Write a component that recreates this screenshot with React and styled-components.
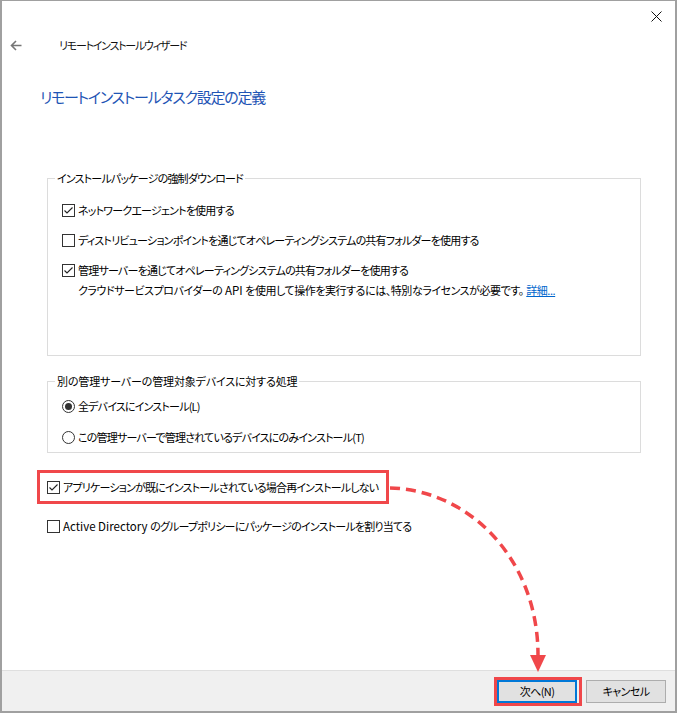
import React from 'react'
import styled, { createGlobalStyle } from 'styled-components'

const Global = createGlobalStyle`
  html, body {
    margin: 0;
    padding: 0;
    background: #fff;
    overflow: hidden;
  }
  body {
    font-family: 'Noto Sans CJK JP', 'Noto Sans', sans-serif;
    font-feature-settings: 'palt';
    color: #000;
  }
`

const RED = '#f0474a'

const Window = styled.div`
  position: relative;
  box-sizing: border-box;
  width: 677px;
  height: 713px;
  border: 2px solid #a0a0a0;
  border-top-width: 1px;
  background: #fff;
  display: flex;
  flex-direction: column;
`

const Close = styled.button`
  position: absolute;
  top: 4px;
  right: 4px;
  width: 30px;
  height: 22px;
  border: 0;
  padding: 0;
  background: none;
  display: flex;
  align-items: center;
  justify-content: center;
`

const Nav = styled.div`
  display: flex;
  align-items: center;
  height: 20px;
  margin-top: 34px;
  padding-left: 8px;
`

const Back = styled.span`
  display: flex;
  width: 12px;
  margin-right: 37px;
`

const WizardTitle = styled.span`
  font-size: 11px;
  letter-spacing: -1.25px;
  color: #111;
`

const Heading = styled.h1`
  margin: 30px 0 0 38px;
  font-size: 15px;
  letter-spacing: -1.25px;
  line-height: 24px;
  font-weight: normal;
  color: #1f55b5;
`

const Body = styled.div`
  display: flex;
  flex-direction: column;
  padding: 0 34px 0 45px;
  margin-top: 61px;
  font-size: 11px;
  letter-spacing: -0.8px;
`

const Latin = styled.span`
  font-size: 11.5px;
  letter-spacing: 0;
`

const Group = styled.fieldset`
  margin: ${p => p.$gap || 0}px 0 0 0;
  border: 1px solid #dcdcdc;
  padding: ${p => p.$pt}px 0 ${p => p.$pb}px 14px;
  min-width: 0;
`

const Legend = styled.legend`
  margin-left: -7px;
  padding: 0 2px;
  font-size: 11px;
  line-height: 16px;
  letter-spacing: ${p => p.$ls ?? -0.8}px;
`

const Rows = styled.div`
  display: flex;
  flex-direction: column;
  gap: ${p => p.$gap}px;
`

const Row = styled.label`
  display: flex;
  align-items: center;
  height: 20px;
  gap: 3px;
  white-space: nowrap;
`

const Note = styled.div`
  height: 20px;
  line-height: 20px;
  padding-left: 16px;
  white-space: pre;
  letter-spacing: -0.45px;
`

const Link = styled.a`
  color: #0066cc;
  text-decoration: underline;
`

const Box = styled.span`
  box-sizing: border-box;
  width: 13px;
  height: 13px;
  border: 1px solid #333;
  background: #fff;
  flex: none;
  display: flex;
`

const Radio = styled.span`
  box-sizing: border-box;
  width: 13px;
  height: 13px;
  border: 1px solid #333;
  border-radius: 50%;
  flex: none;
  display: flex;
  align-items: center;
  justify-content: center;
  &::after {
    content: '';
    width: 7px;
    height: 7px;
    border-radius: 50%;
    background: ${p => (p.$on ? '#333' : 'transparent')};
  }
`

const Highlight = styled.div`
  align-self: flex-start;
  margin: ${p => p.$mt}px 0 0 -10px;
  border: 3px solid ${RED};
  padding: 4px 8px 4px 7px;
`

const Plain = styled.div`
  margin-top: ${p => p.$mt}px;
`

const Spacer = styled.div`
  flex: 1;
`

const Footer = styled.div`
  height: 41px;
  box-sizing: border-box;
  background: #f0f0f0;
  border-top: 1px solid #dfdfdf;
  display: flex;
  align-items: center;
  justify-content: flex-end;
  gap: 4px;
  padding-right: 9px;
`

const ButtonMark = styled.div`
  display: flex;
  border: 3px solid ${RED};
  padding-right: 2px;
  margin: -3px 0;
`

const Button = styled.button`
  box-sizing: border-box;
  width: 80px;
  height: 23px;
  margin: 0;
  padding: 0;
  font-family: inherit;
  font-feature-settings: 'palt';
  font-size: 11px;
  letter-spacing: -0.6px;
  color: #000;
  background: #e1e1e1;
  border: ${p => (p.$primary ? '2px solid #0078d7' : '1px solid #adadad')};
`

const Overlay = styled.svg`
  position: absolute;
  top: -1px;
  left: -2px;
  pointer-events: none;
`

const Check = ({ on }) => (
  <Box>
    {on && (
      <svg width="11" height="11" viewBox="0 0 11 11">
        <path d="M1.5 5.5 L4 8 L9.5 2.5" fill="none" stroke="#222" strokeWidth="1.1" />
      </svg>
    )}
  </Box>
)

const CheckRow = ({ on, children }) => (
  <Row>
    <Check on={on} />
    <span>{children}</span>
  </Row>
)

const RadioRow = ({ on, children }) => (
  <Row>
    <Radio $on={on} />
    <span>{children}</span>
  </Row>
)

export default function App() {
  return (
    <>
      <Global />
      <Window>
        <Close aria-label="close">
          <svg width="11" height="11" viewBox="0 0 11 11">
            <path d="M0.5 0.5 L10.5 10.5 M10.5 0.5 L0.5 10.5" stroke="#111" strokeWidth="1" />
          </svg>
        </Close>

        <Nav>
          <Back>
            <svg width="12" height="11" viewBox="0 0 12 11">
              <path d="M11.5 5.5 H1.5 M6 1 L1.5 5.5 L6 10" fill="none" stroke="#767676" strokeWidth="1.6" />
            </svg>
          </Back>
          <WizardTitle>リモートインストールウィザード</WizardTitle>
        </Nav>

        <Heading>リモートインストールタスク設定の定義</Heading>

        <Body>
          <Group $pt={14} $pb={55}>
            <Legend>インストールパッケージの強制ダウンロード</Legend>
            <Rows $gap={10}>
              <CheckRow on>ネットワークエージェントを使用する</CheckRow>
              <CheckRow>ディストリビューションポイントを通じてオペレーティングシステムの共有フォルダーを使用する</CheckRow>
              <div>
                <CheckRow on>管理サーバーを通じてオペレーティングシステムの共有フォルダーを使用する</CheckRow>
                <Note>
                  クラウドサービスプロバイダーの<Latin> API </Latin>を使用して操作を実行するには、特別なライセンスが必要です。<Latin> </Latin><Link href="#">詳細...</Link>
                </Note>
              </div>
            </Rows>
          </Group>

          <Group $gap={17} $pt={7} $pb={5}>
            <Legend $ls={-0.15}>別の管理サーバーの管理対象デバイスに対する処理</Legend>
            <Rows $gap={11}>
              <RadioRow on>全デバイスにインストール(L)</RadioRow>
              <RadioRow>この管理サーバーで管理されているデバイスにのみインストール(T)</RadioRow>
            </Rows>
          </Group>

          <Highlight $mt={17}>
            <CheckRow on>アプリケーションが既にインストールされている場合再インストールしない</CheckRow>
          </Highlight>

          <Plain $mt={12}>
            <CheckRow>
              <Latin>Active Directory </Latin>のグループポリシーにパッケージのインストールを割り当てる
            </CheckRow>
          </Plain>
        </Body>

        <Spacer />

        <Footer>
          <ButtonMark>
            <Button $primary>次へ(N)</Button>
          </ButtonMark>
          <Button>キャンセル</Button>
        </Footer>

        <Overlay width="677" height="713" viewBox="0 0 677 713">
          <path
            d="M390 488 C 470 490, 538 560, 538 655"
            fill="none"
            stroke={RED}
            strokeWidth="3.5"
            strokeDasharray="10 6"
          />
          <polygon points="530,655 546,655 538,672" fill={RED} />
        </Overlay>
      </Window>
    </>
  )
}
